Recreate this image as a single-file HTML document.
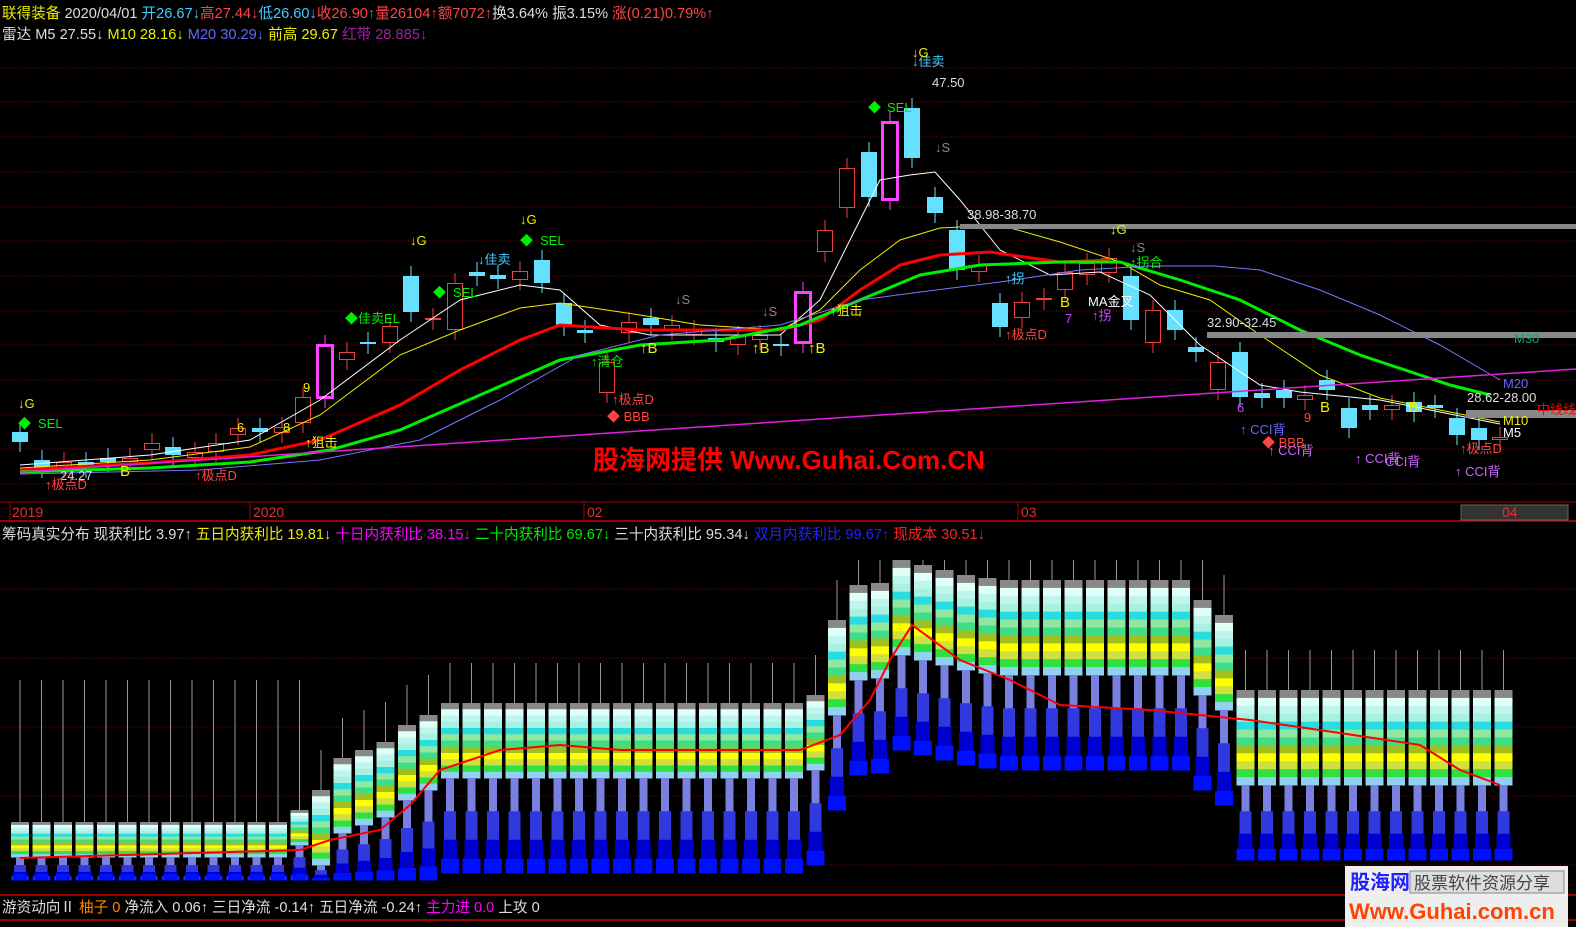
<!DOCTYPE html>
<html><head><meta charset="utf-8"><style>
html,body{margin:0;padding:0;background:#000;width:1576px;height:927px;overflow:hidden}
svg{display:block}
text{font-family:"Liberation Sans","Noto Sans CJK SC",sans-serif}
</style></head><body>
<svg id="s" width="1576" height="927" viewBox="0 0 1576 927" xmlns="http://www.w3.org/2000/svg">
<rect width="1576" height="927" fill="#000"/>
<g id="grid"></g>
<line x1="0" y1="502" x2="1576" y2="502" stroke="#a00" stroke-width="1"/>
<line x1="0" y1="521" x2="1576" y2="521" stroke="#c00" stroke-width="1.5"/>
<g stroke="#a00"><line x1="10" y1="502" x2="10" y2="521"/><line x1="250" y1="502" x2="250" y2="521"/><line x1="584" y1="502" x2="584" y2="521"/><line x1="1018" y1="502" x2="1018" y2="521"/></g>
<g fill="#e03030" font-size="14"><text x="12" y="517">2019</text><text x="253" y="517">2020</text><text x="587" y="517">02</text><text x="1021" y="517">03</text></g>
<rect x="1461" y="505" width="107" height="15" fill="#333" stroke="#666"/>
<text x="1502" y="517" fill="#e03030" font-size="14">04</text>
<line x1="0" y1="895" x2="1576" y2="895" stroke="#c00" stroke-width="1.5"/>
<line x1="0" y1="920" x2="1576" y2="920" stroke="#c00" stroke-width="1.5"/>
<g id="chips"></g>
<g id="cand"></g>
<g id="lines" fill="none"></g>
<rect x="960" y="224" width="616" height="5" fill="#888"/>
<rect x="1207" y="332" width="369" height="6" fill="#888"/>
<rect x="1466" y="410" width="110" height="8" fill="#888"/>
<line x1="20" y1="472" x2="1576" y2="369" stroke="#e020e0" stroke-width="1.5"/>
<g font-size="13">
<text x="932" y="87" fill="#ddd">47.50</text>
<text x="967" y="219" fill="#ddd">38.98-38.70</text>
<text x="1207" y="327" fill="#ddd">32.90-32.45</text>
<text x="1467" y="402" fill="#ddd">28.62-28.00</text>
<text x="60" y="480" fill="#ddd">24.27</text>
<text x="1514" y="343" fill="#0a6">M30</text>
<text x="1503" y="388" fill="#66f">M20</text>
<text x="1503" y="425" fill="#ee0">M10</text>
<text x="1503" y="437" fill="#fff">M5</text>
<text x="1537" y="414" fill="#f00">中线线</text>
<text x="38" y="428" fill="#0e0">SEL</text><text x="18" y="428" fill="#0e0">◆</text>
<text x="540" y="245" fill="#0e0">SEL</text><text x="520" y="245" fill="#0e0">◆</text>
<text x="453" y="297" fill="#0e0">SEL</text><text x="433" y="297" fill="#0e0">◆</text>
<text x="887" y="112" fill="#0e0">SEL</text><text x="868" y="112" fill="#0e0">◆</text>
<text x="345" y="323" fill="#0e0">◆佳卖EL</text>
<text x="478" y="264" fill="#4cf">↓佳卖</text>
<text x="912" y="66" fill="#4cf">↓佳卖</text>
<text x="410" y="245" fill="#ee0">↓G</text><text x="520" y="224" fill="#ee0">↓G</text><text x="18" y="408" fill="#ee0">↓G</text><text x="912" y="57" fill="#ee0">↓G</text><text x="1110" y="234" fill="#ee0">↓G</text>
<text x="675" y="304" fill="#888">↓S</text><text x="762" y="316" fill="#888">↓S</text><text x="935" y="152" fill="#888">↓S</text><text x="1130" y="252" fill="#888">↓S</text>
<text x="640" y="353" fill="#ee0" font-size="15">↑B</text><text x="752" y="353" fill="#ee0" font-size="15">↑B</text><text x="808" y="353" fill="#ee0" font-size="15">↑B</text><text x="1060" y="307" fill="#ee0" font-size="15">B</text><text x="1320" y="412" fill="#ee0" font-size="15">B</text><text x="1408" y="412" fill="#ee0" font-size="15">B</text><text x="120" y="476" fill="#ee0" font-size="15">B</text>
<text x="591" y="366" fill="#0e0">↑清仓</text>
<text x="1005" y="339" fill="#f44">↑极点D</text><text x="612" y="404" fill="#f44">↑极点D</text><text x="195" y="480" fill="#f44">↑极点D</text><text x="45" y="489" fill="#f44">↑极点D</text><text x="1460" y="453" fill="#f44">↑极点D</text>
<text x="607" y="421" fill="#f44">◆ BBB</text><text x="1262" y="447" fill="#f44">◆ BBB</text>
<text x="830" y="315" fill="#ee0">↑狙击</text><text x="305" y="447" fill="#ee0">↑狙击</text>
<text x="1088" y="306" fill="#fff">MA金叉</text>
<text x="1005" y="283" fill="#4cf">↑拐</text><text x="1092" y="320" fill="#c4f">↑拐</text><text x="1130" y="267" fill="#0e0">↑拐合</text>
<text x="1240" y="434" fill="#66f">↑ CCI背</text><text x="1268" y="455" fill="#c6f">↑ CCI背</text><text x="1355" y="463" fill="#c6f">↑ CCI背</text><text x="1385" y="466" fill="#c6f">CCI背</text><text x="1455" y="476" fill="#c6f">↑ CCI背</text>
<text x="1237" y="412" fill="#c4f">6</text><text x="1304" y="422" fill="#f44">9</text><text x="303" y="392" fill="#ee0">9</text><text x="237" y="432" fill="#ee0">6</text><text x="283" y="432" fill="#ee0">8</text><text x="1065" y="323" fill="#c4f">7</text>
</g>
<text x="593" y="469" fill="#f00" font-size="26" font-weight="bold">股海网提供 Www.Guhai.Com.CN</text>
<g font-size="14.6">
<text x="2" y="18"><tspan fill="#ee0">联得装备</tspan><tspan fill="#ddd"> 2020/04/01 </tspan><tspan fill="#4cf">开26.67↓</tspan><tspan fill="#f44">高27.44↓</tspan><tspan fill="#4cf">低26.60↓</tspan><tspan fill="#f44">收26.90↑量26104↑额7072↑</tspan><tspan fill="#ddd">换3.64% 振3.15% </tspan><tspan fill="#f44">涨(0.21)0.79%↑</tspan></text>
<text x="2" y="39"><tspan fill="#ddd">雷达   M5 27.55↓ </tspan><tspan fill="#ee0">M10 28.16↓ </tspan><tspan fill="#66f">M20 30.29↓ </tspan><tspan fill="#ee0">前高 29.67 </tspan><tspan fill="#a020a0">红带 28.885↓</tspan></text>
<text x="2" y="539"><tspan fill="#ddd">筹码真实分布  现获利比 3.97↑ </tspan><tspan fill="#ee0">五日内获利比 19.81↓ </tspan><tspan fill="#f0f">十日内获利比 38.15↓ </tspan><tspan fill="#0e0">二十内获利比 69.67↓ </tspan><tspan fill="#ddd">三十内获利比 95.34↓ </tspan><tspan fill="#22f">双月内获利比 99.67↑ </tspan><tspan fill="#f22">现成本 30.51↓</tspan></text>
<text x="2" y="912"><tspan fill="#ddd">游资动向Ⅱ  </tspan><tspan fill="#f80">柚子 0 </tspan><tspan fill="#ddd"> 净流入 0.06↑ 三日净流 -0.14↑ 五日净流 -0.24↑ </tspan><tspan fill="#f0f">主力进 0.0 </tspan><tspan fill="#ddd"> 上攻 0</tspan></text>
</g>
<rect x="1345" y="866" width="223" height="61" fill="#eee"/>
<text x="1350" y="889" fill="#22f" font-size="20" font-weight="bold">股海网</text>
<rect x="1410" y="871" width="154" height="22" fill="#ddd" stroke="#888"/>
<text x="1414" y="889" fill="#444" font-size="17">股票软件资源分享</text>
<text x="1349" y="919" fill="#f40" font-size="22" font-weight="bold">Www.Guhai.com.cn</text>
</svg>
<script>
var NS="http://www.w3.org/2000/svg";
function el(p,t,a){var e=document.createElementNS(NS,t);for(var k in a)e.setAttribute(k,a[k]);document.getElementById(p).appendChild(e);return e;}
[68,102,137,172,207,241,276,311,345,380,415,449,484].forEach(function(y){el("grid","line",{x1:0,x2:1576,y1:y,y2:y,stroke:"#8a0000","stroke-dasharray":"1 2"})});
[589,658,727,796,865].forEach(function(y){el("grid","line",{x1:0,x2:1576,y1:y,y2:y,stroke:"#8a0000","stroke-dasharray":"1 2"})});
var C=[[20,432,442,'c'],[42,460,468,'c'],[64,462,468,'r'],[86,462,468,'c'],[108,458,462,'c'],[130,458,462,'r'],[152,443,450,'r'],[173,447,455,'c'],[195,452,458,'r'],[216,443,452,'r'],[238,428,435,'r'],[260,428,432,'c'],[282,427,433,'r'],[303,397,423,'r'],[325,345,398,'m'],[347,352,360,'r'],[368,342,344,'c'],[390,326,343,'r'],[411,276,312,'c'],[433,318,320,'r'],[455,283,330,'r'],[477,272,276,'c'],[498,275,279,'c'],[520,271,280,'r'],[542,260,283,'c'],[564,303,326,'c'],[585,330,333,'c'],[607,362,393,'r'],[629,322,333,'r'],[651,318,325,'c'],[672,325,330,'r'],[694,330,335,'r'],[716,338,342,'c'],[738,336,345,'r'],[760,335,340,'r'],[781,344,346,'c'],[803,292,343,'m'],[825,230,252,'r'],[847,168,208,'r'],[869,152,197,'c'],[890,122,200,'m'],[912,108,158,'c'],[935,197,213,'c'],[957,230,270,'c'],[979,265,272,'r'],[1000,303,327,'c'],[1022,302,318,'r'],[1044,298,300,'r'],[1065,272,290,'r'],[1087,263,275,'r'],[1109,258,273,'r'],[1131,276,320,'c'],[1153,310,343,'r'],[1175,310,330,'c'],[1196,347,352,'c'],[1218,362,390,'r'],[1240,352,397,'c'],[1262,393,398,'c'],[1284,390,398,'c'],[1305,395,400,'r'],[1327,380,390,'c'],[1349,408,428,'c'],[1370,405,410,'c'],[1392,405,410,'r'],[1414,402,412,'c'],[1435,405,408,'c'],[1457,418,435,'c'],[1479,428,440,'c'],[1500,437,440,'r']];
C.forEach(function(c){var col=c[3]=='c'?'#66e0ff':(c[3]=='m'?'#ff40ff':'#f04040');var h=Math.max(2,c[2]-c[1]);
el("cand","line",{x1:c[0],x2:c[0],y1:c[1]-10,y2:c[2]+10,stroke:col});
if(c[3]=='c')el("cand","rect",{x:c[0]-8,y:c[1],width:16,height:h,fill:col});
else el("cand","rect",{x:c[0]-7.5,y:c[1]+.5,width:15,height:h-1,fill:"#000",stroke:col,"stroke-width":c[3]=='m'?3:1});});
function pl(pts,col,w){el("lines","polyline",{points:pts,stroke:col,"stroke-width":w});}
pl("20,465 150,455 250,440 320,400 400,340 460,300 520,285 560,290 600,325 650,335 700,335 780,335 820,300 850,240 880,180 910,175 935,172 960,200 1000,250 1050,275 1100,272 1150,295 1200,345 1260,385 1300,392 1380,400 1440,412 1500,424","#fff",1);
pl("20,468 150,460 250,447 320,415 400,355 460,330 520,308 560,303 640,315 700,325 780,330 820,310 860,270 900,240 940,228 1000,225 1060,242 1120,262 1160,285 1210,300 1260,335 1320,375 1380,398 1440,410 1500,422","#ee0",1);
pl("20,470 150,463 250,455 320,440 400,405 460,370 520,340 560,325 640,330 700,330 780,330 820,320 860,290 900,265 940,255 990,252 1060,262 1110,260","#f00",3);
pl("20,472 150,468 250,462 330,450 400,430 480,395 560,360 640,345 720,340 800,325 860,300 920,275 980,265 1060,262 1120,262 1180,280 1240,300 1300,330 1360,355 1420,375 1450,385 1490,395","#0e0",3);
pl("20,474 200,470 320,460 420,440 500,400 580,355 660,335 780,325 860,300 920,292 1000,282 1080,270 1150,266 1215,266 1260,270 1320,290 1380,315 1440,345 1500,380","#77f",1);
pl("20,858 300,850 330,840 380,830 410,805 440,770 500,750 560,745 620,750 800,750 840,735 870,700 890,660 912,625 960,660 1010,680 1060,705 1150,710 1250,720 1340,733 1420,745 1460,770 1500,785","#f00",2);
var tops=[];
for(var i=0;i<70;i++){var t;
 if(i<=12)t=822;else if(i==13)t=810;else if(i==14)t=790;else if(i==15)t=758;else if(i==16)t=750;else if(i==17)t=742;else if(i==18)t=725;else if(i==19)t=715;
 else if(i<=36)t=703;else if(i==37)t=695;else if(i==38)t=620;else if(i==39)t=585;else if(i==40)t=583;else if(i==41)t=560;
 else if(i==42)t=565;else if(i==43)t=570;else if(i==44)t=575;else if(i==45)t=578;else if(i<=54)t=580;else if(i==55)t=600;else if(i==56)t=615;else t=690;
 tops.push(t);}
var cols=["#888","#e0fff8","#bff5ee","#a8f0e0","#28dce0","#90e8a0","#40dd88","#a0c020","#ffff00","#d0e040","#30e040","#90d0f0"];
for(var i=0;i<70;i++){var x=20+i*21.5,T=tops[i];var full=(T<760)?130:55; if(T<650)full=150;
 var band=(i<14)?35:(i<38?75:(i<57?95:95));
 var bot=Math.min(T+full+40,880);
 el("chips","line",{x1:x,x2:x,y1:i<14?680:Math.max(T-40,560),y2:T,stroke:"#999"});
 var h=band/cols.length;
 for(var k=0;k<cols.length;k++){el("chips","rect",{x:x-9,y:T+k*h,width:18,height:h+0.5,fill:cols[k]});}
 var y0=T+band, rest=bot-y0; if(rest<10)rest=10;
 var bl=[["#7a80e0",4,0.35],["#3038e0",6,0.3],["#0000d0",7,0.2],["#0010ff",9,0.15]];
 var yy=y0;bl.forEach(function(b){var hh=rest*b[2];el("chips","rect",{x:x-b[1],y:yy,width:b[1]*2,height:hh+0.5,fill:b[0]});yy+=hh;});
 if(i<14){el("chips","rect",{x:x-8,y:bot-4,width:16,height:4,fill:"#3038e0"});el("chips","rect",{x:x-7,y:874,width:14,height:6,fill:"#0010ff"});}
}
</script>
</body></html>
